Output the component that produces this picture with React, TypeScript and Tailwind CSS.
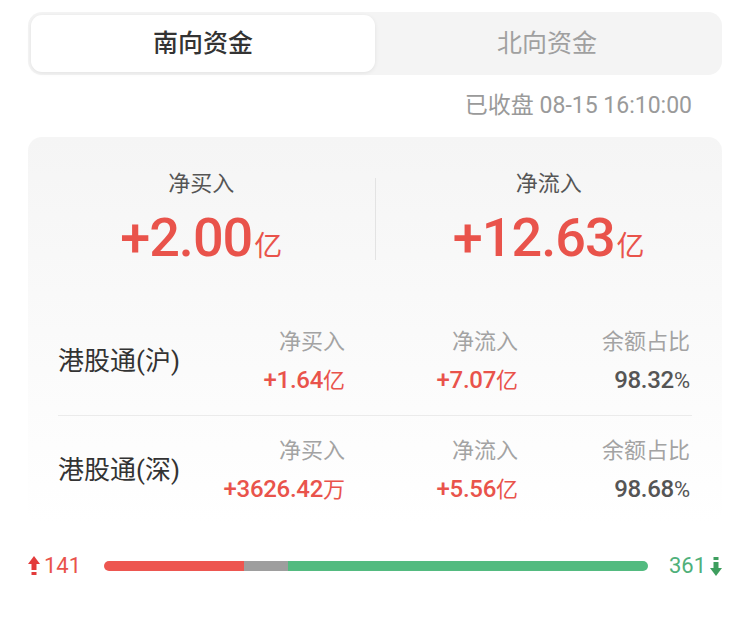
const font = { fontFamily: "Roboto, 'Noto Sans CJK SC', sans-serif" };

type Row = {
  name: string;
  buy: string;
  buyUnit: string;
  flow: string;
  flowUnit: string;
  ratio: string;
};

const rows: Row[] = [
  { name: "港股通(沪)", buy: "+1.64", buyUnit: "亿", flow: "+7.07", flowUnit: "亿", ratio: "98.32" },
  { name: "港股通(深)", buy: "+3626.42", buyUnit: "万", flow: "+5.56", flowUnit: "亿", ratio: "98.68" },
];

const Stat = ({ label, value }: { label: string; value: string }) => (
  <div className="flex flex-1 flex-col items-center">
    <div className="text-[22px] leading-[28px] text-[#555]">{label}</div>
    <div className="mt-[10px] flex items-baseline text-[#e9534b]">
      <span className="text-[54px] font-medium leading-[60px] tracking-[-1px]">{value}</span>
      <span className="ml-[2px] text-[28px] leading-none">亿</span>
    </div>
  </div>
);

const Cell = ({ label, value, unit, red = true }: { label: string; value: string; unit: string; red?: boolean }) => (
  <div className="flex flex-col items-end">
    <div className="text-[22px] leading-[28px] text-[#a3a3a3]">{label}</div>
    <div className={`mt-[10px] flex items-baseline leading-[28px] ${red ? "text-[#e9534b]" : "text-[#555]"}`}>
      <span className="text-[24px] font-medium tracking-[-0.3px]">{value}</span>
      <span className="text-[22px]">{unit}</span>
    </div>
  </div>
);

export default function App() {
  return (
    <div className="h-[628px] w-[750px] bg-white px-7" style={font}>
      <div className="mt-3 flex h-[63px] rounded-[14px] bg-[#f4f4f4] p-[3px]">
        <div className="flex flex-1 items-center justify-center rounded-[11px] bg-white text-[25px] font-medium text-[#333] shadow-[0_1px_4px_rgba(0,0,0,0.08)]">
          南向资金
        </div>
        <div className="flex flex-1 items-center justify-center text-[25px] text-[#a0a0a0]">北向资金</div>
      </div>

      <div className="flex h-[62px] items-center justify-end pr-[30px] text-[23px] text-[#9a9a9a]">
        已收盘 08-15 16:10:00
      </div>

      <div className="rounded-[14px] bg-gradient-to-b from-[#f5f5f5] to-white">
        <div className="flex items-start pt-[33px]">
          <Stat label="净买入" value="+2.00" />
          <div className="mt-[8px] h-[82px] w-px bg-[#e3e3e3]" />
          <Stat label="净流入" value="+12.63" />
        </div>

        <div className="mt-[40px] px-[30px]">
          {rows.map((r, i) => (
            <div
              key={r.name}
              className={`flex h-[108px] items-center ${i === 0 ? "border-b border-[#ebebeb]" : ""}`}
            >
              <div className="w-[160px] text-[26px] text-[#333]">{r.name}</div>
              <div className="flex flex-1">
                <div className="w-[127px]">
                  <Cell label="净买入" value={r.buy} unit={r.buyUnit} />
                </div>
                <div className="w-[173px]">
                  <Cell label="净流入" value={r.flow} unit={r.flowUnit} />
                </div>
                <div className="w-[172px]">
                  <Cell label="余额占比" value={r.ratio} unit="%" red={false} />
                </div>
              </div>
            </div>
          ))}
        </div>
      </div>

      <div className="mt-[25px] flex items-center">
        <div className="flex w-[76px] items-center text-[22px] text-[#e9534b]">
          <svg width="12" height="20" viewBox="0 0 12 20" className="mr-[4px]">
            <path d="M6 0 L12 8 H8.5 V14 H3.5 V8 H0 Z" fill="#e33b3b" />
            <rect x="3.5" y="16" width="5" height="3" fill="#e33b3b" />
          </svg>
          141
        </div>
        <div className="flex h-[10px] flex-1 overflow-hidden rounded-full">
          <div className="w-[140px] bg-[#ed5650]" />
          <div className="w-[44px] bg-[#9e9e9e]" />
          <div className="flex-1 bg-[#53bb80]" />
        </div>
        <div className="flex w-[74px] items-center justify-end text-[22px] text-[#4fb07a]">
          361
          <svg width="12" height="20" viewBox="0 0 12 20" className="ml-[4px]">
            <rect x="3.5" y="1" width="5" height="3" fill="#3e9e5e" />
            <path d="M6 20 L12 12 H8.5 V6 H3.5 V12 H0 Z" fill="#3e9e5e" />
          </svg>
        </div>
      </div>
    </div>
  );
}
